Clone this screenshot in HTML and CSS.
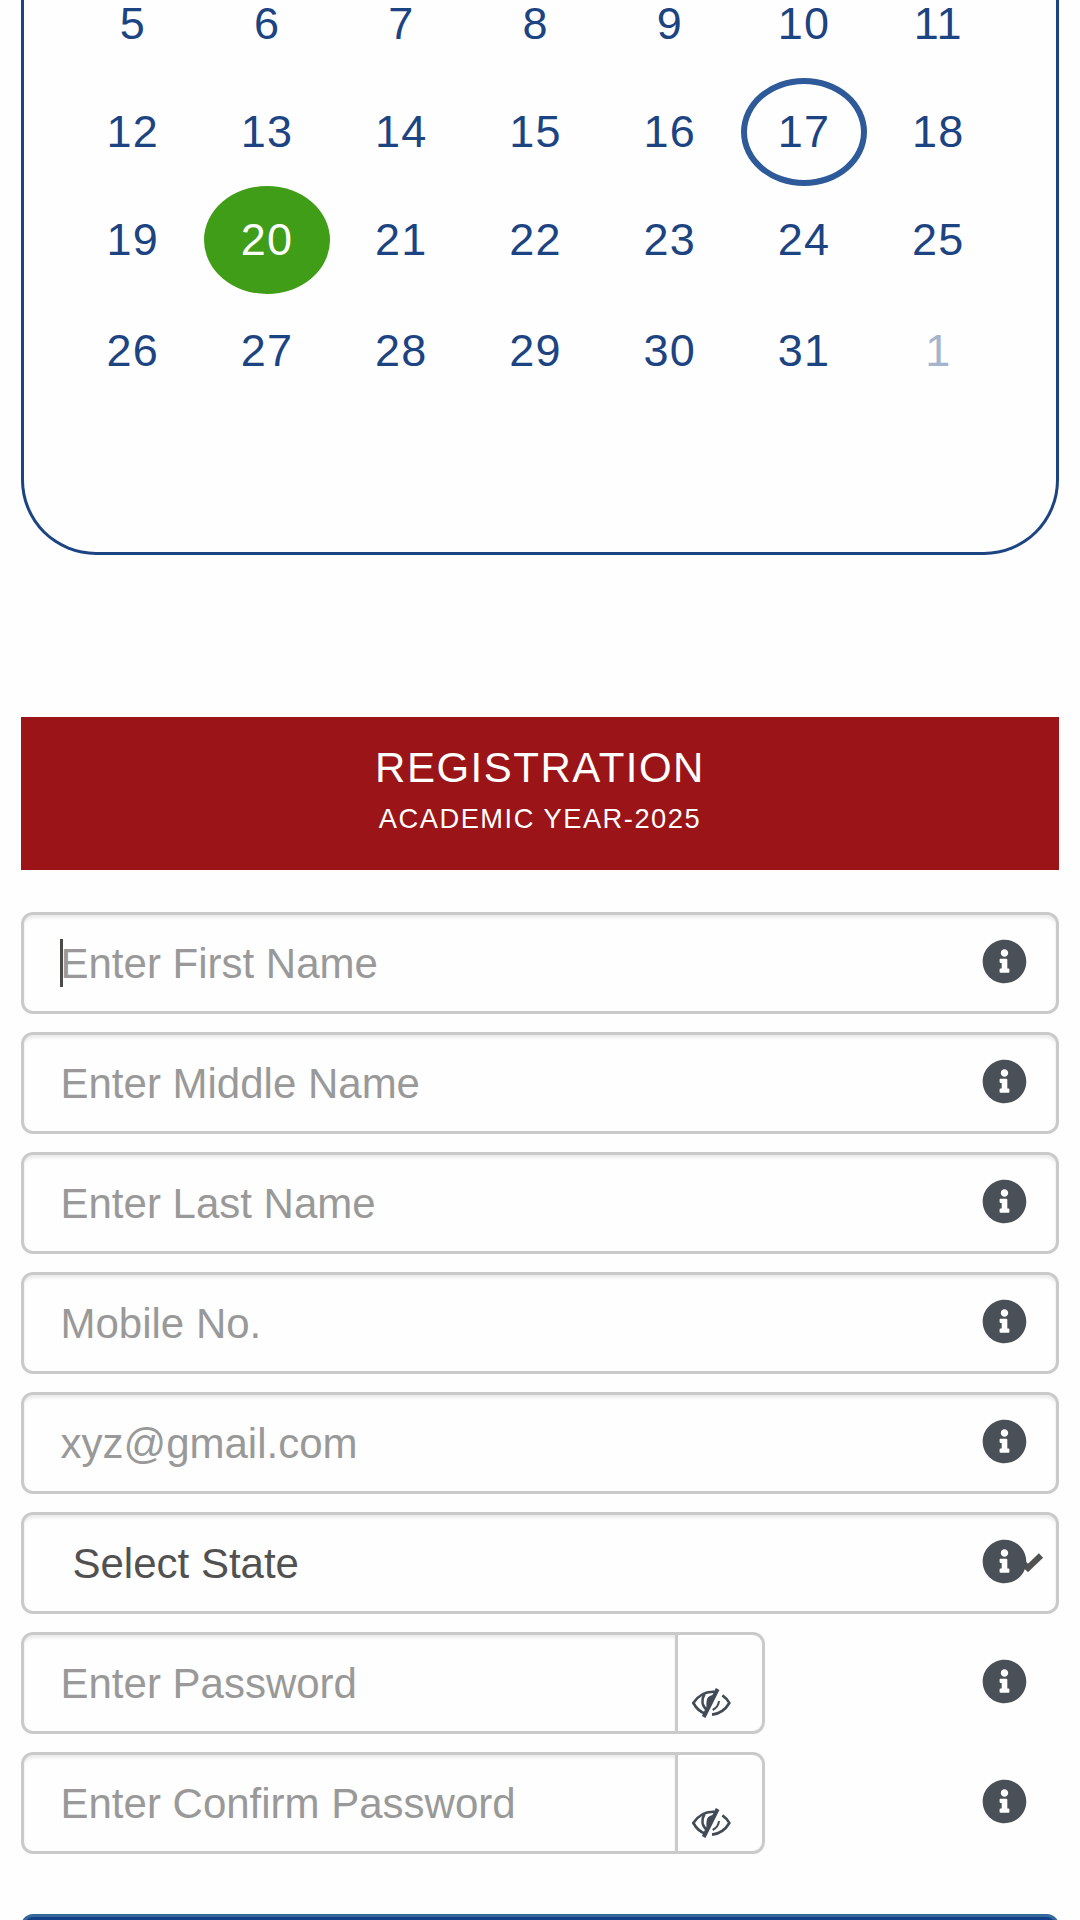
FILE: index.html
```html
<!DOCTYPE html>
<html lang="en">
<head>
<meta charset="utf-8">
<title>Registration</title>
<link rel="stylesheet" href="styles.css">
</head>
<body>
<svg class="sprite" width="0" height="0" aria-hidden="true">
  <symbol id="info" viewBox="0 0 512 512"><path d="M256 8C119.043 8 8 119.083 8 256c0 136.997 111.043 248 248 248s248-111.003 248-248C504 119.083 392.957 8 256 8zm0 110c23.196 0 42 18.804 42 42s-18.804 42-42 42-42-18.804-42-42 18.804-42 42-42zm56 254c0 6.627-5.373 12-12 12h-88c-6.627 0-12-5.373-12-12v-24c0-6.627 5.373-12 12-12h12v-64h-12c-6.627 0-12-5.373-12-12v-24c0-6.627 5.373-12 12-12h64c6.627 0 12 5.373 12 12v100h12c6.627 0 12 5.373 12 12v24z"/></symbol>
  <symbol id="eye-off" viewBox="0 0 126 96">
    <g fill="none" stroke="currentColor" stroke-width="8">
      <path d="M79 15C46 11 25 25 10 48c9 16 21 27 36 32"/>
      <path d="M97 25c9 6 16 13 21 23-11 19-28 32-52 35"/>
      <path d="M43 22c-9 16-8 34 8 47"/>
      <path d="M87 42c-1 12-8 21-19 27" stroke-width="6"/>
    </g>
    <path fill="currentColor" d="M50 42c1-11 9-18 21-17L53 66c-4-6-5-15-3-24z"/>
    <path fill="none" stroke="currentColor" stroke-width="12" d="M83 6 41 90"/>
  </symbol>
</svg>
<main class="page">
  <section class="calendar">
    <div class="days">
      <span>5</span><span>6</span><span>7</span><span>8</span><span>9</span><span>10</span><span>11</span>
      <span>12</span><span>13</span><span>14</span><span>15</span><span>16</span><span class="today">17</span><span>18</span>
      <span>19</span><span class="selected">20</span><span>21</span><span>22</span><span>23</span><span>24</span><span>25</span>
      <span>26</span><span>27</span><span>28</span><span>29</span><span>30</span><span>31</span><span class="outside">1</span>
    </div>
  </section>
  <header class="banner">
    <h1>REGISTRATION</h1>
    <p>ACADEMIC YEAR-2025</p>
  </header>
  <form class="form">
    <div class="row"><div class="field focused">Enter First Name</div><svg class="info"><use href="#info"/></svg></div>
    <div class="row"><div class="field">Enter Middle Name</div><svg class="info"><use href="#info"/></svg></div>
    <div class="row"><div class="field">Enter Last Name</div><svg class="info"><use href="#info"/></svg></div>
    <div class="row"><div class="field">Mobile No.</div><svg class="info"><use href="#info"/></svg></div>
    <div class="row"><div class="field">xyz@gmail.com</div><svg class="info"><use href="#info"/></svg></div>
    <div class="row"><div class="field select">Select State<svg class="chevron" viewBox="0 0 32 20"><path d="M3 3.5 16 16 29 3.5"/></svg></div><svg class="info"><use href="#info"/></svg></div>
    <div class="row"><div class="field password">Enter Password</div><div class="addon"><svg class="eye"><use href="#eye-off"/></svg></div><svg class="info"><use href="#info"/></svg></div>
    <div class="row"><div class="field password">Enter Confirm Password</div><div class="addon"><svg class="eye"><use href="#eye-off"/></svg></div><svg class="info"><use href="#info"/></svg></div>
    <div class="submit"></div>
  </form>
</main>
</body>
</html>
```
FILE: styles.css
```css
* { box-sizing: border-box; }
html { background: #fefefe; }
body {
  margin: 0;
  height: 1920px;
  overflow: hidden;
  font-family: "Liberation Sans", Arial, sans-serif;
}
.sprite { position: absolute; }
.page {
  display: flex;
  flex-direction: column;
  height: 1920px;
  padding: 0 21px;
  overflow: hidden;
}
.calendar {
  flex: none;
  height: 555px;
  border: 3px solid #1c4482;
  border-top: 0;
  border-radius: 0 0 75px 75px;
}
.days {
  display: grid;
  grid-template-columns: repeat(7, 126px);
  grid-template-rows: 78px 108px 111px 108px;
  justify-content: space-between;
  margin: 0 54.75px 0 45.75px;
}
.days span {
  height: 108px;
  line-height: 108px;
  font-size: 45px;
  letter-spacing: 1.2px;
  text-align: center;
  color: #1c4482;
}
.days span:nth-child(-n + 7) {
  height: 48px;
  line-height: 48px;
}
.days .today {
  border: 6px solid #2e5a99;
  border-radius: 50%;
  line-height: 96px;
}
.days .selected {
  border-radius: 50%;
  background: #409d17;
  color: #fff;
}
.days .outside { color: #a4b4cd; }
.banner {
  flex: none;
  height: 153px;
  margin-top: 162px;
  padding-top: 27px;
  background: #9b1417;
  color: #fff;
  text-align: center;
  letter-spacing: 1.5px;
}
.banner h1 {
  margin: 0;
  font-size: 42px;
  font-weight: 400;
  line-height: 48px;
}
.banner p {
  margin: 7px 0 0;
  font-size: 27.3px;
  line-height: 39px;
}
.form {
  display: flex;
  flex-direction: column;
  gap: 18px;
  margin-top: 42px;
}
.row {
  display: flex;
  align-items: center;
  position: relative;
  height: 102px;
}
.field {
  flex: 1;
  display: flex;
  align-items: center;
  position: relative;
  height: 102px;
  padding: 1px 36px 0 36.5px;
  border: 3px solid #cacaca;
  border-radius: 12px;
  box-shadow: inset 0 3px 3px rgba(0, 0, 0, 0.075);
  color: #999;
  font-size: 42px;
  white-space: nowrap;
}
.focused::before {
  content: "";
  position: absolute;
  left: 36px;
  top: 24px;
  width: 3px;
  height: 48px;
  background: #4b4b47;
}
.select {
  padding-left: 48.5px;
  padding-right: 12px;
  justify-content: space-between;
  color: #515151;
}
.chevron {
  width: 32px;
  height: 20px;
  margin-bottom: 3px;
  fill: none;
  stroke: #515151;
  stroke-width: 6;
}
.password {
  flex: 0 0 657px;
  border-radius: 12px 0 0 12px;
}
.addon {
  width: 87px;
  height: 102px;
  border: 3px solid #cacaca;
  border-left: 0;
  border-radius: 0 12px 12px 0;
  padding: 52px 0 0 12px;
}
.eye {
  display: block;
  width: 42px;
  height: 32px;
  color: #414b55;
}
.info {
  position: absolute;
  right: 32px;
  top: 27px;
  width: 45px;
  height: 45px;
  fill: #495057;
}
.submit {
  flex: none;
  height: 102px;
  margin-top: 42px;
  border: 3px solid #34699a;
  border-radius: 12px;
  background: #124089;
}
```
